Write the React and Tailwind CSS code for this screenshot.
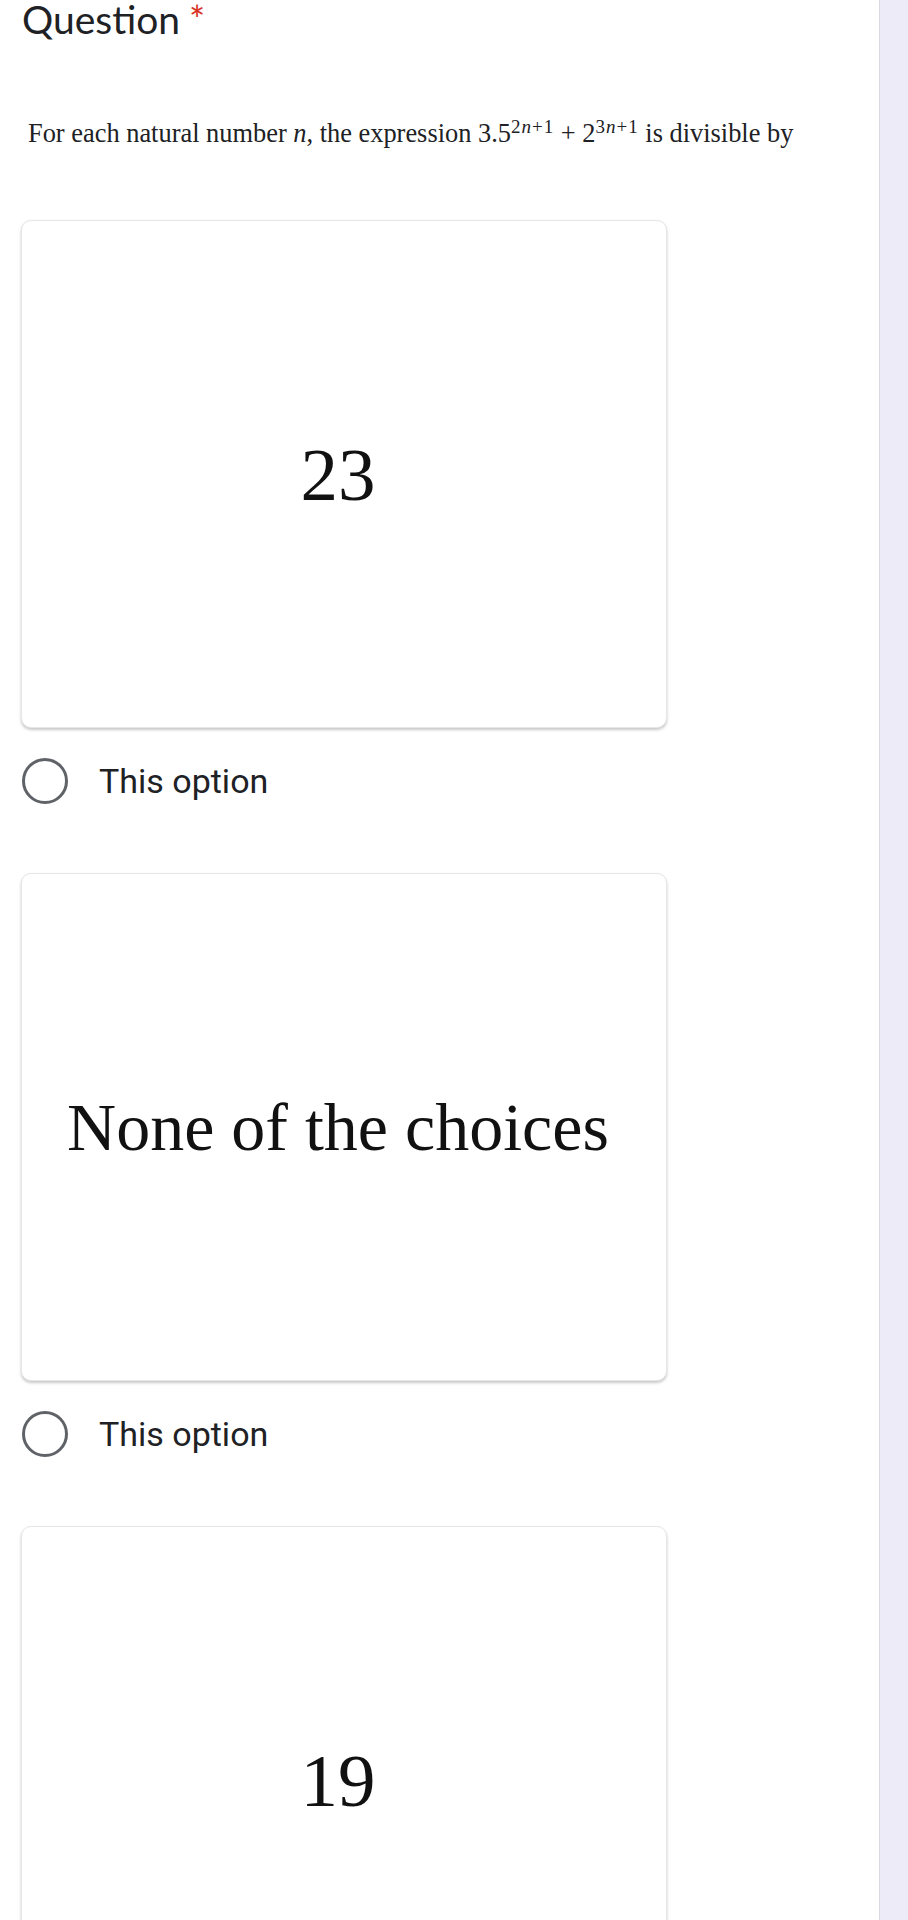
export default function App() {
  const Card = ({ children, textClass }) => (
    <div className="w-[646px] h-[508px] ml-[21px] rounded-[10px] bg-white border border-[#e6e6e6] shadow-[0_2px_3px_rgba(0,0,0,0.22)] flex items-center justify-center pr-[12px]">
      <span className={textClass} style={{ fontFamily: '"Liberation Serif", "Times New Roman", serif' }}>
        {children}
      </span>
    </div>
  );
  const Radio = () => (
    <div className="ml-[22px] mt-[30px] mb-[69px] h-[46px] flex items-center">
      <div className="w-[46px] h-[46px] rounded-full border-[3.5px] border-[#5f6368] box-border" />
      <span
        className="ml-[31px] text-[34px] leading-none text-[#202124]"
        style={{ fontFamily: 'Roboto, "Noto Sans", sans-serif' }}
      >
        This option
      </span>
    </div>
  );
  return (
    <div className="flex w-[908px] h-[1920px] overflow-hidden bg-white">
      <div className="w-[879px] bg-white flex flex-col shrink-0">
        <div
          className="pl-[22px] h-[40px] text-[39px] leading-[38px] text-[#202124] flex items-baseline"
          style={{ fontFamily: 'Lato, "Open Sans", sans-serif' }}
        >
          <span>Question</span>
          <span className="ml-[9px] text-[#d93025] text-[38px]">*</span>
        </div>
        <div
          className="mt-[82px] pl-[28px] h-[26px] text-[26.4px] leading-[26px] text-[#202124] whitespace-nowrap"
          style={{ fontFamily: '"Liberation Serif", "Times New Roman", serif' }}
        >
          For each natural number <i>n</i>, the expression 3.5
          <sup className="text-[19px] tracking-[1px]">2<i>n</i>+1</sup> + 2
          <sup className="text-[19px] tracking-[1px]">3<i>n</i>+1</sup> is divisible by
        </div>
        <div className="mt-[74px]">
          <Card textClass="text-[75px] leading-none text-[#111111]">23</Card>
          <Radio />
          <Card textClass="text-[68px] leading-none text-[#111111]">None of the choices</Card>
          <Radio />
          <Card textClass="text-[75px] leading-none text-[#111111]">19</Card>
        </div>
      </div>
      <div className="flex-1 bg-[#eeebf8] border-l border-[#dcd9e4]" />
    </div>
  );
}
